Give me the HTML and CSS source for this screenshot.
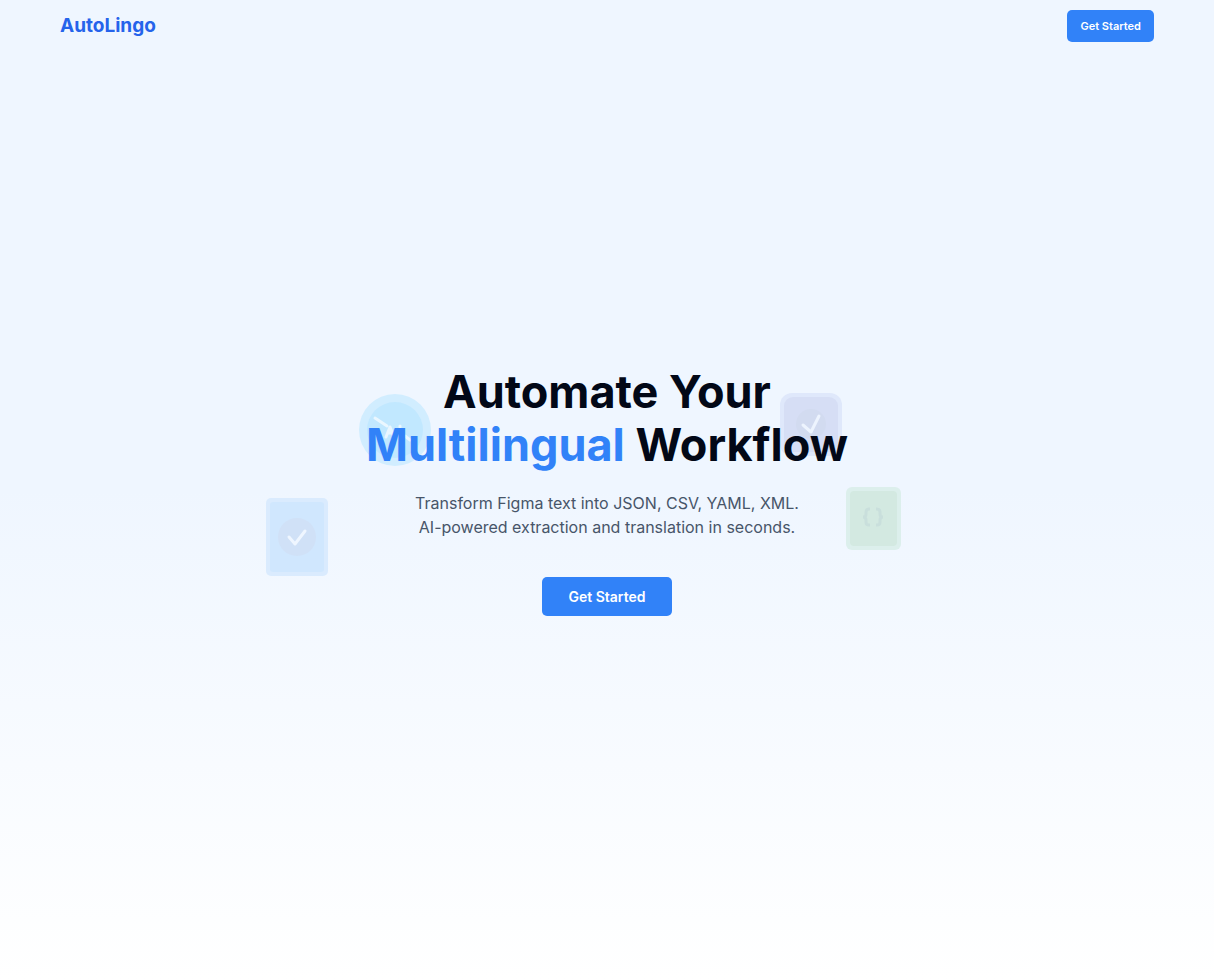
FILE: index.html
```
<!DOCTYPE html>
<html lang="en">
<head>
	<meta charset="UTF-8">
	<meta name="viewport" content="width=device-width, initial-scale=1">
	<title>AutoLingo</title>
	<link rel="stylesheet" href="styles.css">
</head>
<body>
	<header class="header">
		<a class="logo" href="#">AutoLingo</a>
		<button class="btn btn-small" type="button">Get Started</button>
	</header>
	<main class="hero">
		<div class="hero-inner">
			<!-- floating icons behind the text -->
			<svg class="float float-translate" width="72" height="72" viewBox="0 0 72 72" aria-hidden="true">
				<circle cx="36" cy="36" r="36" fill="#d1edff"/>
				<circle cx="36" cy="36" r="28" fill="#c1e8ff"/>
				<g fill="none" stroke="#eaf7ff" stroke-width="3" stroke-linecap="round" stroke-linejoin="round">
					<path d="M16 24l12 8M27 43l4-10 4 10M29 39h5M41 32v1M41 38v3M46 42l5 4"/>
				</g>
			</svg>
			<svg class="float float-badge" width="62" height="63" viewBox="0 0 62 63" aria-hidden="true">
				<rect width="62" height="63" rx="12" fill="#dfe8fb"/>
				<rect x="4" y="4" width="54" height="55" rx="9" fill="#d6def5"/>
				<circle cx="31" cy="31" r="15" fill="#d2dbf0"/>
				<path d="M23 32l8 7 8-16" fill="none" stroke="#edf4fe" stroke-width="3" stroke-linecap="round" stroke-linejoin="round"/>
			</svg>
			<svg class="float float-file" width="62" height="78" viewBox="0 0 62 78" aria-hidden="true">
				<rect width="62" height="78" rx="5" fill="#daebfe"/>
				<rect x="4" y="4" width="54" height="70" rx="3" fill="#d0e7fe"/>
				<circle cx="31" cy="39" r="19" fill="#d0e1f7"/>
				<path d="M23 39l6 7 10-13" fill="none" stroke="#eff6ff" stroke-width="3" stroke-linecap="round" stroke-linejoin="round"/>
			</svg>
			<svg class="float float-code" width="55" height="63" viewBox="0 0 55 63" aria-hidden="true">
				<rect width="55" height="63" rx="6" fill="#dcefec"/>
				<rect x="4" y="4" width="47" height="55" rx="4" fill="#d3e9e1"/>
				<path d="M24 22h-1q-3 0-3 3v2q0 3-3 3q3 0 3 3v2q0 3 3 3h1M30 22h1q3 0 3 3v2q0 3 3 3q-3 0-3 3v2q0 3-3 3h-1" fill="none" stroke="#c9dfdc" stroke-width="3"/>
			</svg>
			<h1 class="title">Automate Your<br><span class="accent">Multilingual</span> Workflow</h1>
			<p class="lead">Transform Figma text into JSON, CSV, YAML, XML.<br>AI-powered extraction and translation in seconds.</p>
			<button class="btn btn-large" type="button">Get Started</button>
		</div>
	</main>
</body>
</html>
```
FILE: styles.css
```
* {box-sizing: border-box;}
body {margin: 0; font-family: Inter, "Liberation Sans", sans-serif; color: #020817;}

.header {position: absolute; top: 0; left: 0; right: 0; display: flex; align-items: center; justify-content: space-between; padding: 10px 60px;}
.logo {font-size: 19px; line-height: 32px; font-weight: 700; color: #2563eb; text-decoration: none;}

.btn {border: 0; border-radius: 5px; background: #3182f8; color: #fff; font-family: inherit; font-weight: 600; cursor: pointer;}
.btn:hover {background: #2563eb;}
.btn-small {padding: 8px 13px; font-size: 11px; line-height: 16px;}
.btn-large {padding: 9px 26px; font-size: 14px; line-height: 21px;}

.hero {min-height: 100vh; display: flex; align-items: center; justify-content: center; background: linear-gradient(#eff6ff 50%, #fff 100%);}
.hero-inner {position: relative; width: 100%; max-width: 700px; text-align: center;}
.title {position: relative; margin: 0 0 20px; font-size: 45px; line-height: 53px; font-weight: 700;}
.accent {color: #3182f8;}
.lead {position: relative; margin: 0 0 38px; font-size: 16px; line-height: 24px; color: #475569;}

.float {position: absolute;}
.float-translate {left: 102px; top: 29px;}
.float-badge {left: 523px; top: 28px;}
.float-file {left: 9px; top: 133px;}
.float-code {left: 589px; top: 122px;}
```
